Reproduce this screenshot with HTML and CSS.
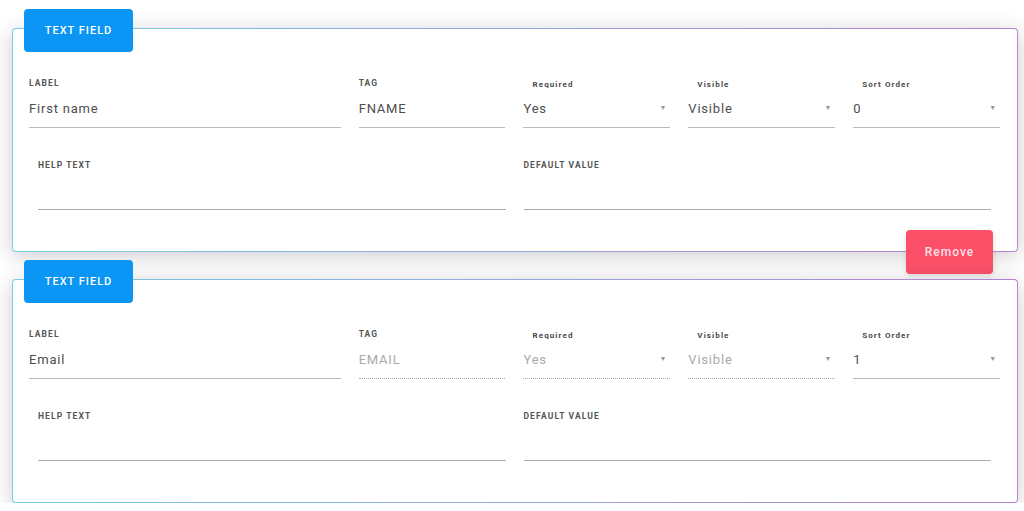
FILE: index.html
```html
<!DOCTYPE html>
<html lang="en">
<head>
    <meta charset="UTF-8">
    <meta name="viewport" content="width=device-width, initial-scale=1.0">
    <title>Form Fields</title>
    <link rel="stylesheet" href="styles.css">
</head>
<body>
    <div class="field-card">
        <div class="field-type">Text Field</div>
        <div class="row row-main">
            <div class="field">
                <label>Label</label>
                <input type="text" value="First name">
            </div>
            <div class="field">
                <label>Tag</label>
                <input type="text" value="FNAME">
            </div>
            <div class="field select">
                <label>Required</label>
                <div class="select-box"><span>Yes</span><span class="arrow">&#9660;</span></div>
            </div>
            <div class="field select">
                <label>Visible</label>
                <div class="select-box"><span>Visible</span><span class="arrow">&#9660;</span></div>
            </div>
            <div class="field select">
                <label>Sort Order</label>
                <div class="select-box"><span>0</span><span class="arrow">&#9660;</span></div>
            </div>
        </div>
        <div class="row row-extra">
            <div class="field">
                <label>Help Text</label>
                <input type="text" value="">
            </div>
            <div class="field">
                <label>Default Value</label>
                <input type="text" value="">
            </div>
        </div>
        <button class="remove">Remove</button>
    </div>

    <div class="field-card">
        <div class="field-type">Text Field</div>
        <div class="row row-main">
            <div class="field">
                <label>Label</label>
                <input type="text" value="Email">
            </div>
            <div class="field disabled">
                <label>Tag</label>
                <input type="text" value="EMAIL" disabled>
            </div>
            <div class="field select disabled">
                <label>Required</label>
                <div class="select-box"><span>Yes</span><span class="arrow">&#9660;</span></div>
            </div>
            <div class="field select disabled">
                <label>Visible</label>
                <div class="select-box"><span>Visible</span><span class="arrow">&#9660;</span></div>
            </div>
            <div class="field select">
                <label>Sort Order</label>
                <div class="select-box"><span>1</span><span class="arrow">&#9660;</span></div>
            </div>
        </div>
        <div class="row row-extra">
            <div class="field">
                <label>Help Text</label>
                <input type="text" value="">
            </div>
            <div class="field">
                <label>Default Value</label>
                <input type="text" value="">
            </div>
        </div>
    </div>
</body>
</html>
```

FILE: styles.css
```css
body {
    font-family: Roboto, "Liberation Sans", sans-serif;
    margin: 0;
    padding: 28px 6px 0 12px;
    background-color: #fff;
    color: #444;
}
.field-card {
    position: relative;
    border: 1px solid transparent;
    border-radius: 4px;
    background: linear-gradient(#fff, #fff) padding-box,
                linear-gradient(to right, #74cde2, #b682d2) border-box;
    box-shadow: 0 4px 22px rgba(0, 0, 0, 0.2);
    padding: 48px 17px 41px 16px;
}
.field-card + .field-card {
    margin-top: 27px;
}
.field-type {
    position: absolute;
    top: -20px;
    left: 11px;
    width: 109px;
    height: 43px;
    line-height: 43px;
    background-color: #0b95f5;
    border-radius: 4px;
    color: #fff;
    font-size: 11px;
    font-weight: 500;
    letter-spacing: 1px;
    text-transform: uppercase;
    text-align: center;
}
.row {
    display: grid;
    gap: 18px;
}
.row-main {
    grid-template-columns: 312fr 147fr 147fr 147fr 147fr;
}
.row-extra {
    grid-template-columns: 1fr 1fr;
    padding: 0 9px;
    margin-top: 31px;
}
.field label {
    display: block;
    height: 12px;
    line-height: 12px;
    font-size: 8.5px;
    font-weight: 700;
    letter-spacing: 1.1px;
    text-transform: uppercase;
    color: #555;
}
.field.select label {
    text-transform: none;
    padding-left: 9px;
    padding-top: 2px;
    height: 10px;
    font-size: 8px;
    color: #4a4a4a;
}
.field input,
.select-box {
    display: block;
    width: 100%;
    box-sizing: border-box;
    height: 39px;
    margin: 0;
    padding: 0;
    border: none;
    border-bottom: 1px solid #b9b9b9;
    background: transparent;
    font-family: inherit;
    font-size: 13px;
    letter-spacing: 0.8px;
    color: #4d4d4d;
    outline: none;
}
.select-box {
    display: flex;
    align-items: center;
    justify-content: space-between;
}
.select-box .arrow {
    font-size: 7px;
    color: #999;
    margin-right: 3px;
}
.field.disabled input,
.field.disabled .select-box {
    border-bottom: 1px dotted #aaa;
    color: #aaa;
}
.row-extra input {
    border-bottom-color: #aaa;
}
.remove {
    position: absolute;
    right: 24px;
    bottom: -23px;
    width: 87px;
    height: 44px;
    background-color: #fc5069;
    color: #fcdfe4;
    border: none;
    border-radius: 4px;
    box-shadow: 0 2px 6px rgba(0, 0, 0, 0.12);
    font-family: inherit;
    font-size: 12px;
    font-weight: 500;
    letter-spacing: 1px;
    cursor: pointer;
}
.remove:hover {
    background-color: #e94560;
}
```
